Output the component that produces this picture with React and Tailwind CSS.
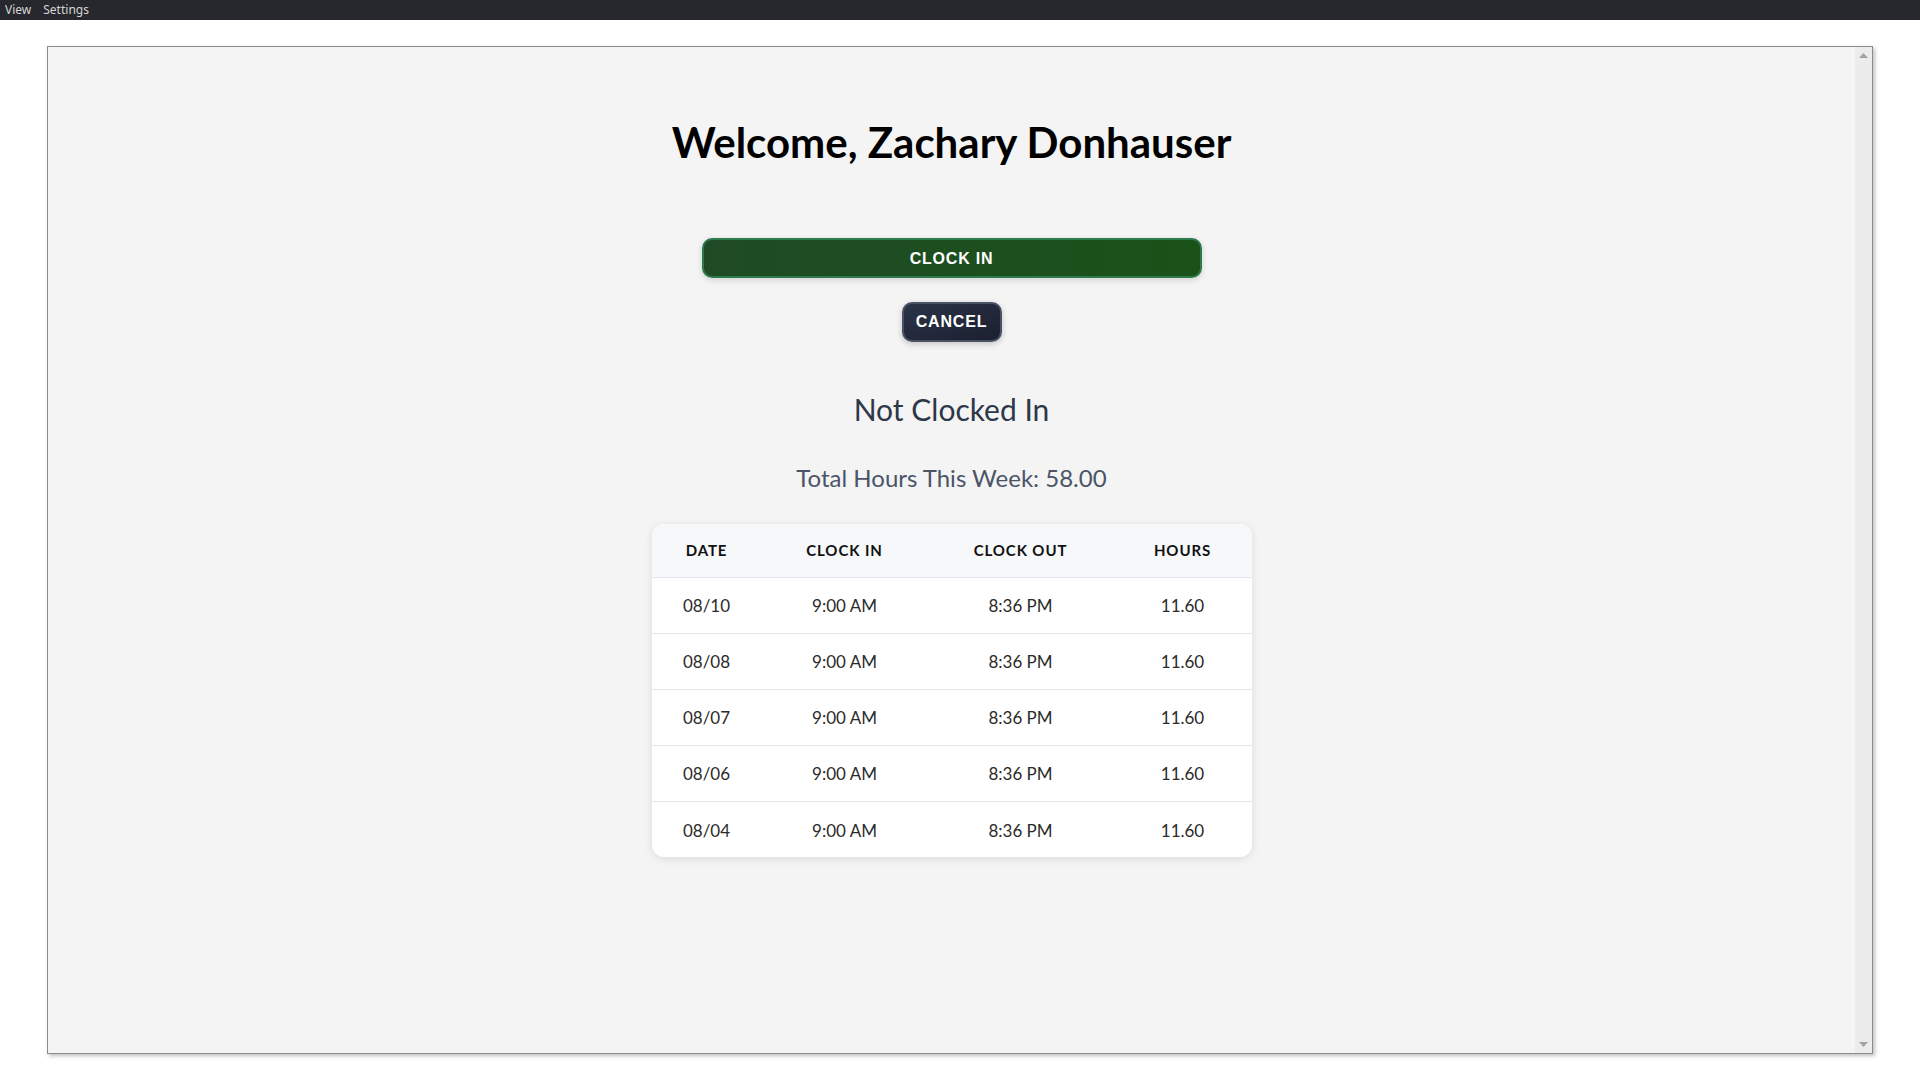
import React from 'react';

const entries = [
  { date: '08/10', clockIn: '9:00 AM', clockOut: '8:36 PM', hours: '11.60' },
  { date: '08/08', clockIn: '9:00 AM', clockOut: '8:36 PM', hours: '11.60' },
  { date: '08/07', clockIn: '9:00 AM', clockOut: '8:36 PM', hours: '11.60' },
  { date: '08/06', clockIn: '9:00 AM', clockOut: '8:36 PM', hours: '11.60' },
  { date: '08/04', clockIn: '9:00 AM', clockOut: '8:36 PM', hours: '11.60' },
];

const App = () => {
  return (
    <div className="min-h-screen bg-white font-['Lato',sans-serif]">
      {/* Menu bar */}
      <div className="h-5 bg-[#26282d] flex items-center gap-[12px] px-[5px] text-[12px] text-[#d6d6d6] font-['Noto_Sans',sans-serif]">
        <span>View</span>
        <span>Settings</span>
      </div>

      {/* Window */}
      <div className="ml-[47px] mt-[26px] w-[1826px] h-[1008px] border border-[#8c8c8c] bg-[#f4f4f4] shadow-[2px_2px_4px_rgba(0,0,0,0.25)] flex">
        <div className="flex-1 flex flex-col items-center pt-[65px]">
          <h1 className="text-[42px] leading-[60px] font-bold text-black">Welcome, Zachary Donhauser</h1>

          <button className="mt-[66px] w-[500px] h-[40px] pt-[2px] rounded-[10px] border-2 border-[#2f7a4c] bg-gradient-to-r from-[#1f4a25] to-[#1a5218] text-white text-[16px] font-bold tracking-[0.05em] font-['Liberation_Sans',sans-serif] shadow-[0_2px_6px_rgba(0,0,0,0.15)]">
            CLOCK IN
          </button>

          <button className="mt-[24px] w-[100px] h-[40px] rounded-[10px] border-2 border-[#4a5268] bg-gradient-to-br from-[#2a3347] to-[#1c2030] text-white text-[16px] font-bold tracking-[0.05em] font-['Liberation_Sans',sans-serif] shadow-[0_2px_6px_rgba(0,0,0,0.2)]">
            CANCEL
          </button>

          <div className="mt-[47px] text-[30px] leading-[40px] text-[#2d3748]">Not Clocked In</div>

          <div className="mt-[33px] text-[24px] leading-[32px] text-[#4a5568]">Total Hours This Week: 58.00</div>

          <div className="mt-[30px] w-[600px] bg-white rounded-[12px] shadow-[0_2px_8px_rgba(0,0,0,0.1)] overflow-hidden">
            <table className="w-full border-collapse text-center">
              <thead>
                <tr className="bg-[#f7f8fa] border-b border-[#e2e8f0] h-[53px] text-[15px] font-bold tracking-[0.06em] text-[#111111]">
                  <th className="w-[110px] font-bold">DATE</th>
                  <th className="w-[166px] font-bold">CLOCK IN</th>
                  <th className="w-[186px] font-bold">CLOCK OUT</th>
                  <th className="w-[138px] font-bold">HOURS</th>
                </tr>
              </thead>
              <tbody className="text-[17px] text-[#2b2b2b]">
                {entries.map((row, i) => (
                  <tr key={i} className={`h-[56px] ${i < entries.length - 1 ? 'border-b border-[#e2e8f0]' : ''}`}>
                    <td className="pt-[2px]">{row.date}</td>
                    <td className="pt-[2px]">{row.clockIn}</td>
                    <td className="pt-[2px]">{row.clockOut}</td>
                    <td className="pt-[2px]">{row.hours}</td>
                  </tr>
                ))}
              </tbody>
            </table>
          </div>
        </div>

        {/* Scrollbar */}
        <div className="w-[17px] bg-[#ececec] flex flex-col items-center justify-between py-[6px]">
          <svg width="9" height="5" viewBox="0 0 9 5"><path d="M4.5 0 L9 5 L0 5 Z" fill="#a3a3a3" /></svg>
          <svg width="9" height="5" viewBox="0 0 9 5"><path d="M0 0 L9 0 L4.5 5 Z" fill="#a3a3a3" /></svg>
        </div>
      </div>
    </div>
  );
};

export default App;
